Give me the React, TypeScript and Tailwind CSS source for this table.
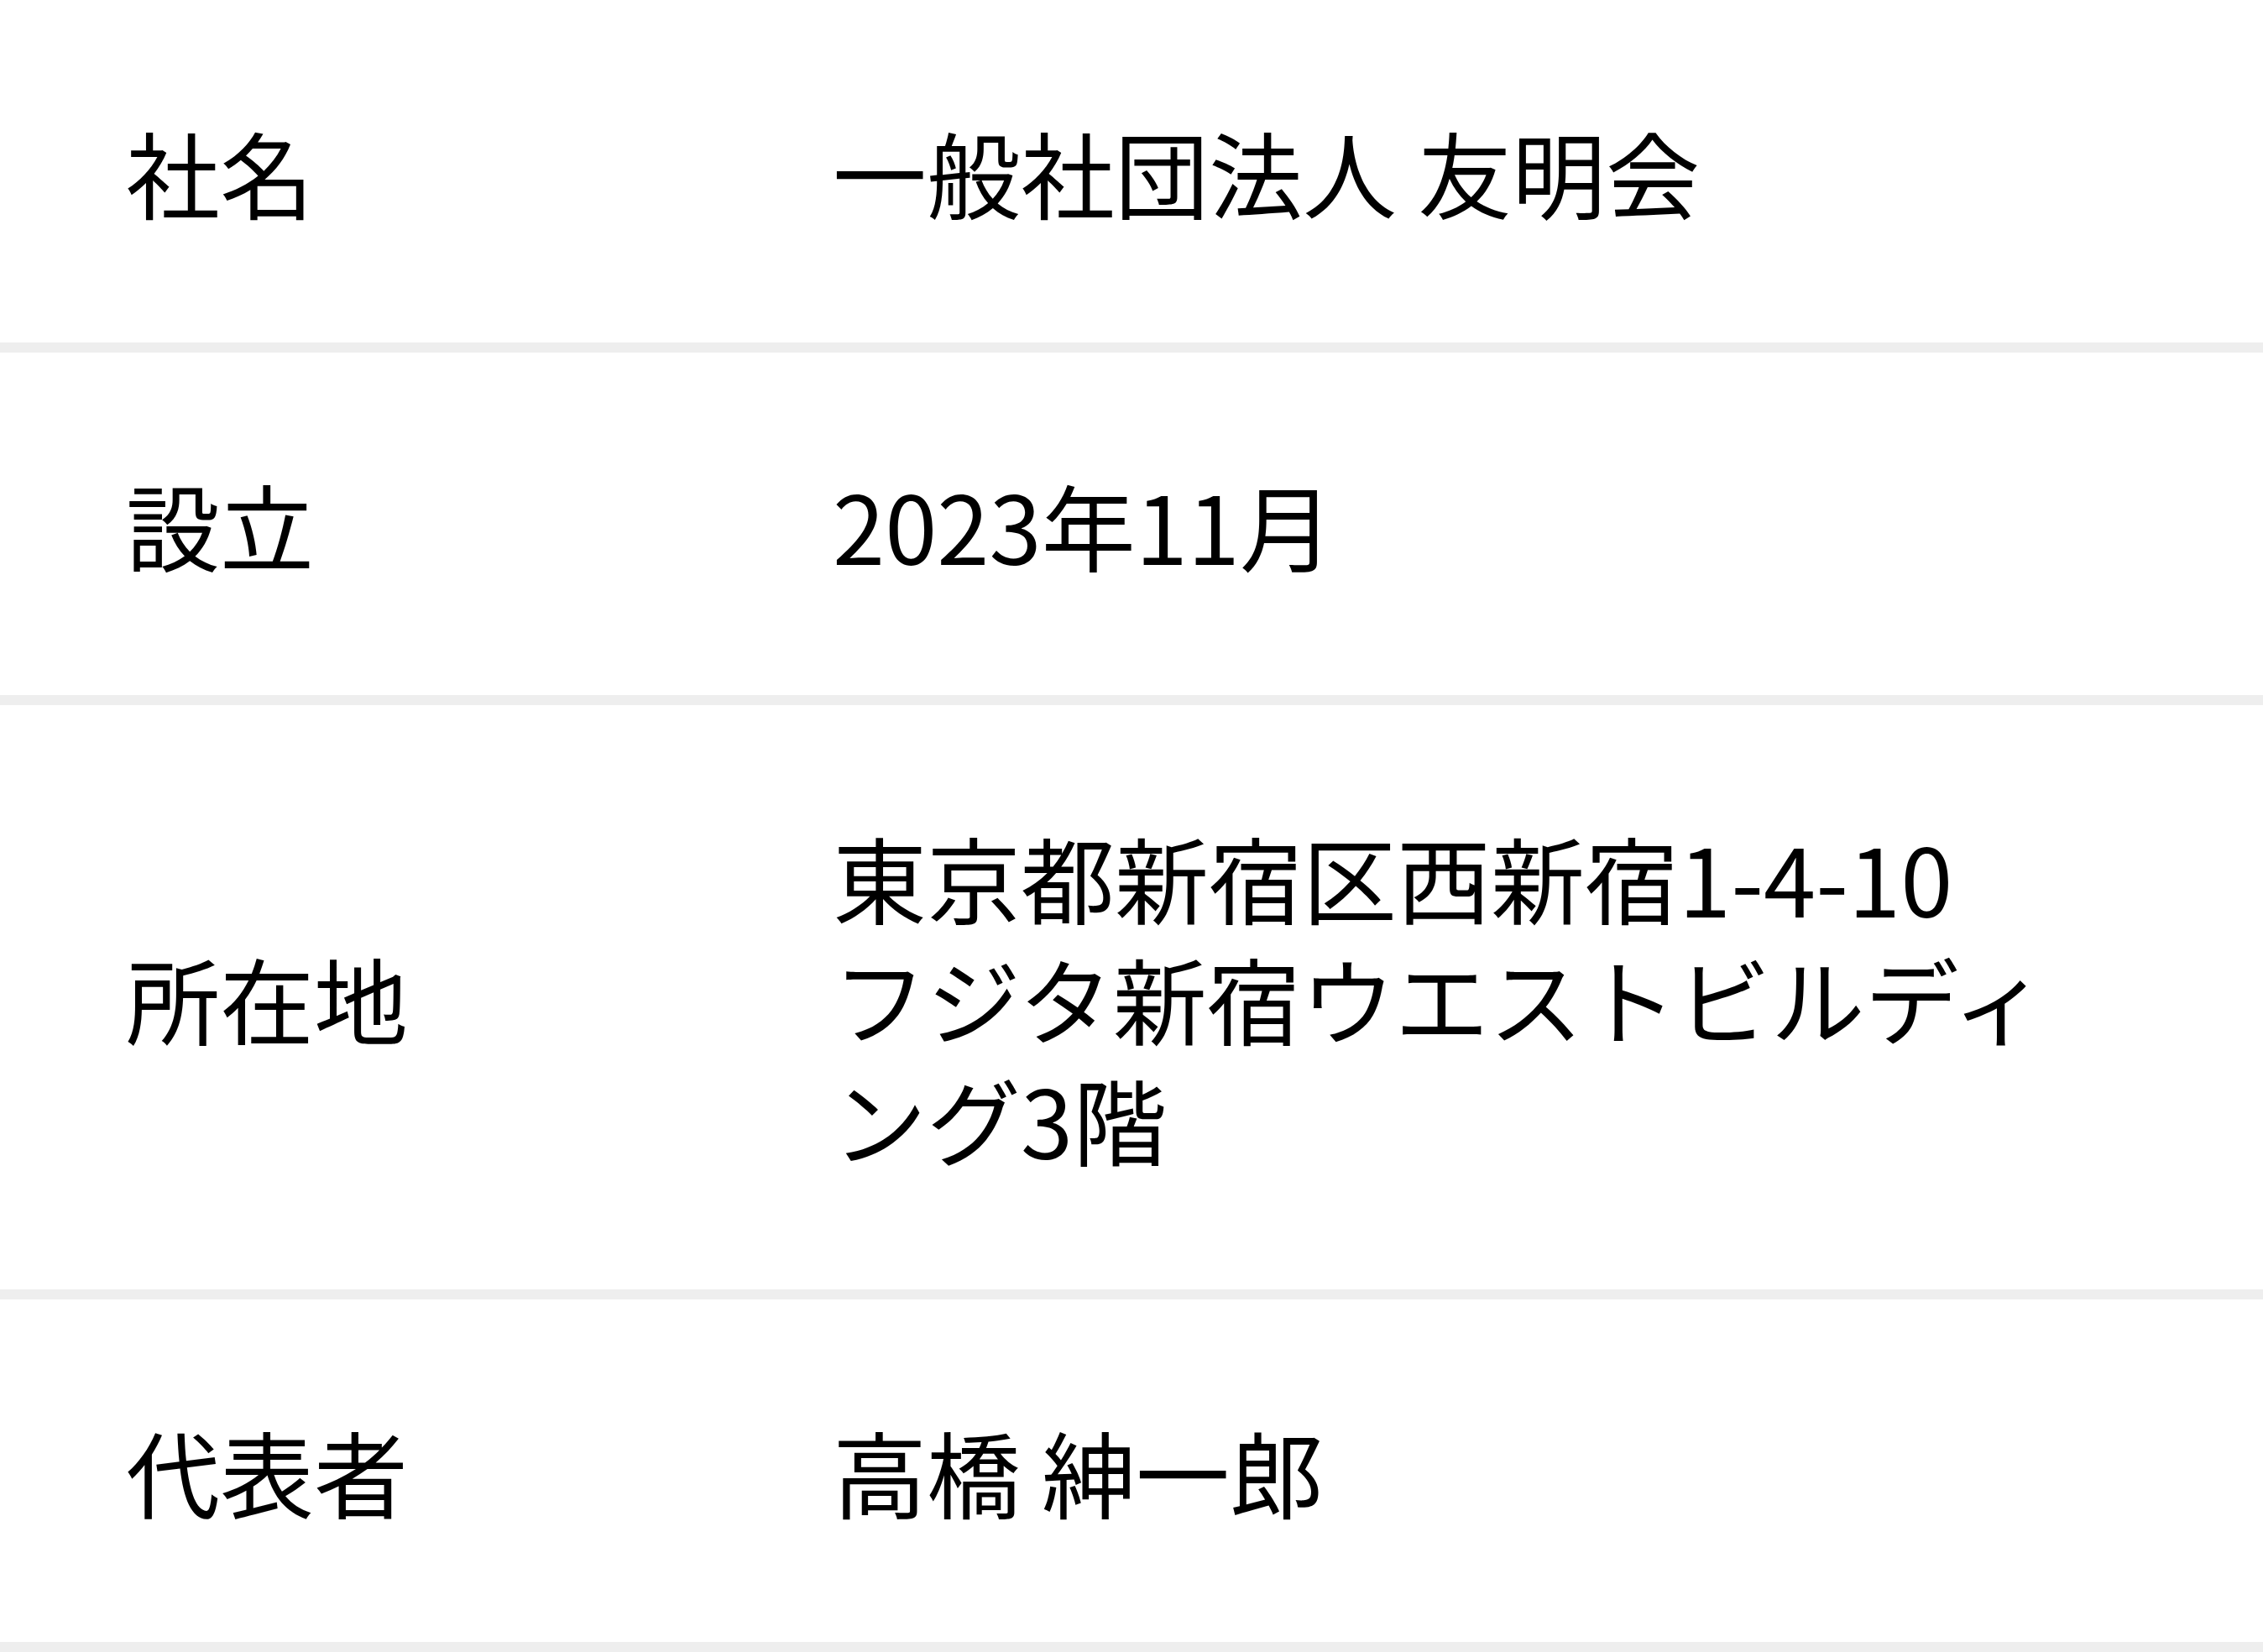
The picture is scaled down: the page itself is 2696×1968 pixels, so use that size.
import type { ReactNode } from "react";

const rows: { label: string; value: ReactNode }[] = [
  { label: "社名", value: "一般社団法人 友明会" },
  { label: "設立", value: "2023年11月" },
  {
    label: "所在地",
    value: (
      <>
        東京都新宿区西新宿1-4-10
        <br />
        フジタ新宿ウエストビルディング3階
      </>
    ),
  },
  { label: "代表者", value: "高橋 紳一郎" },
];

export default function App() {
  return (
    <main className="min-h-screen bg-white text-black font-['Noto_Sans_CJK_JP','Noto_Sans',sans-serif]">
      <dl>
        {rows.map((row) => (
          <div
            key={row.label}
            className="flex items-center border-b-[12px] border-[#eeeeee] py-[132px] pl-[150px] pr-[200px] text-[112px] leading-[144px] font-normal"
          >
            <dt className="w-[842px] shrink-0">{row.label}</dt>
            <dd className="flex-1 min-w-0">{row.value}</dd>
          </div>
        ))}
      </dl>
    </main>
  );
}
